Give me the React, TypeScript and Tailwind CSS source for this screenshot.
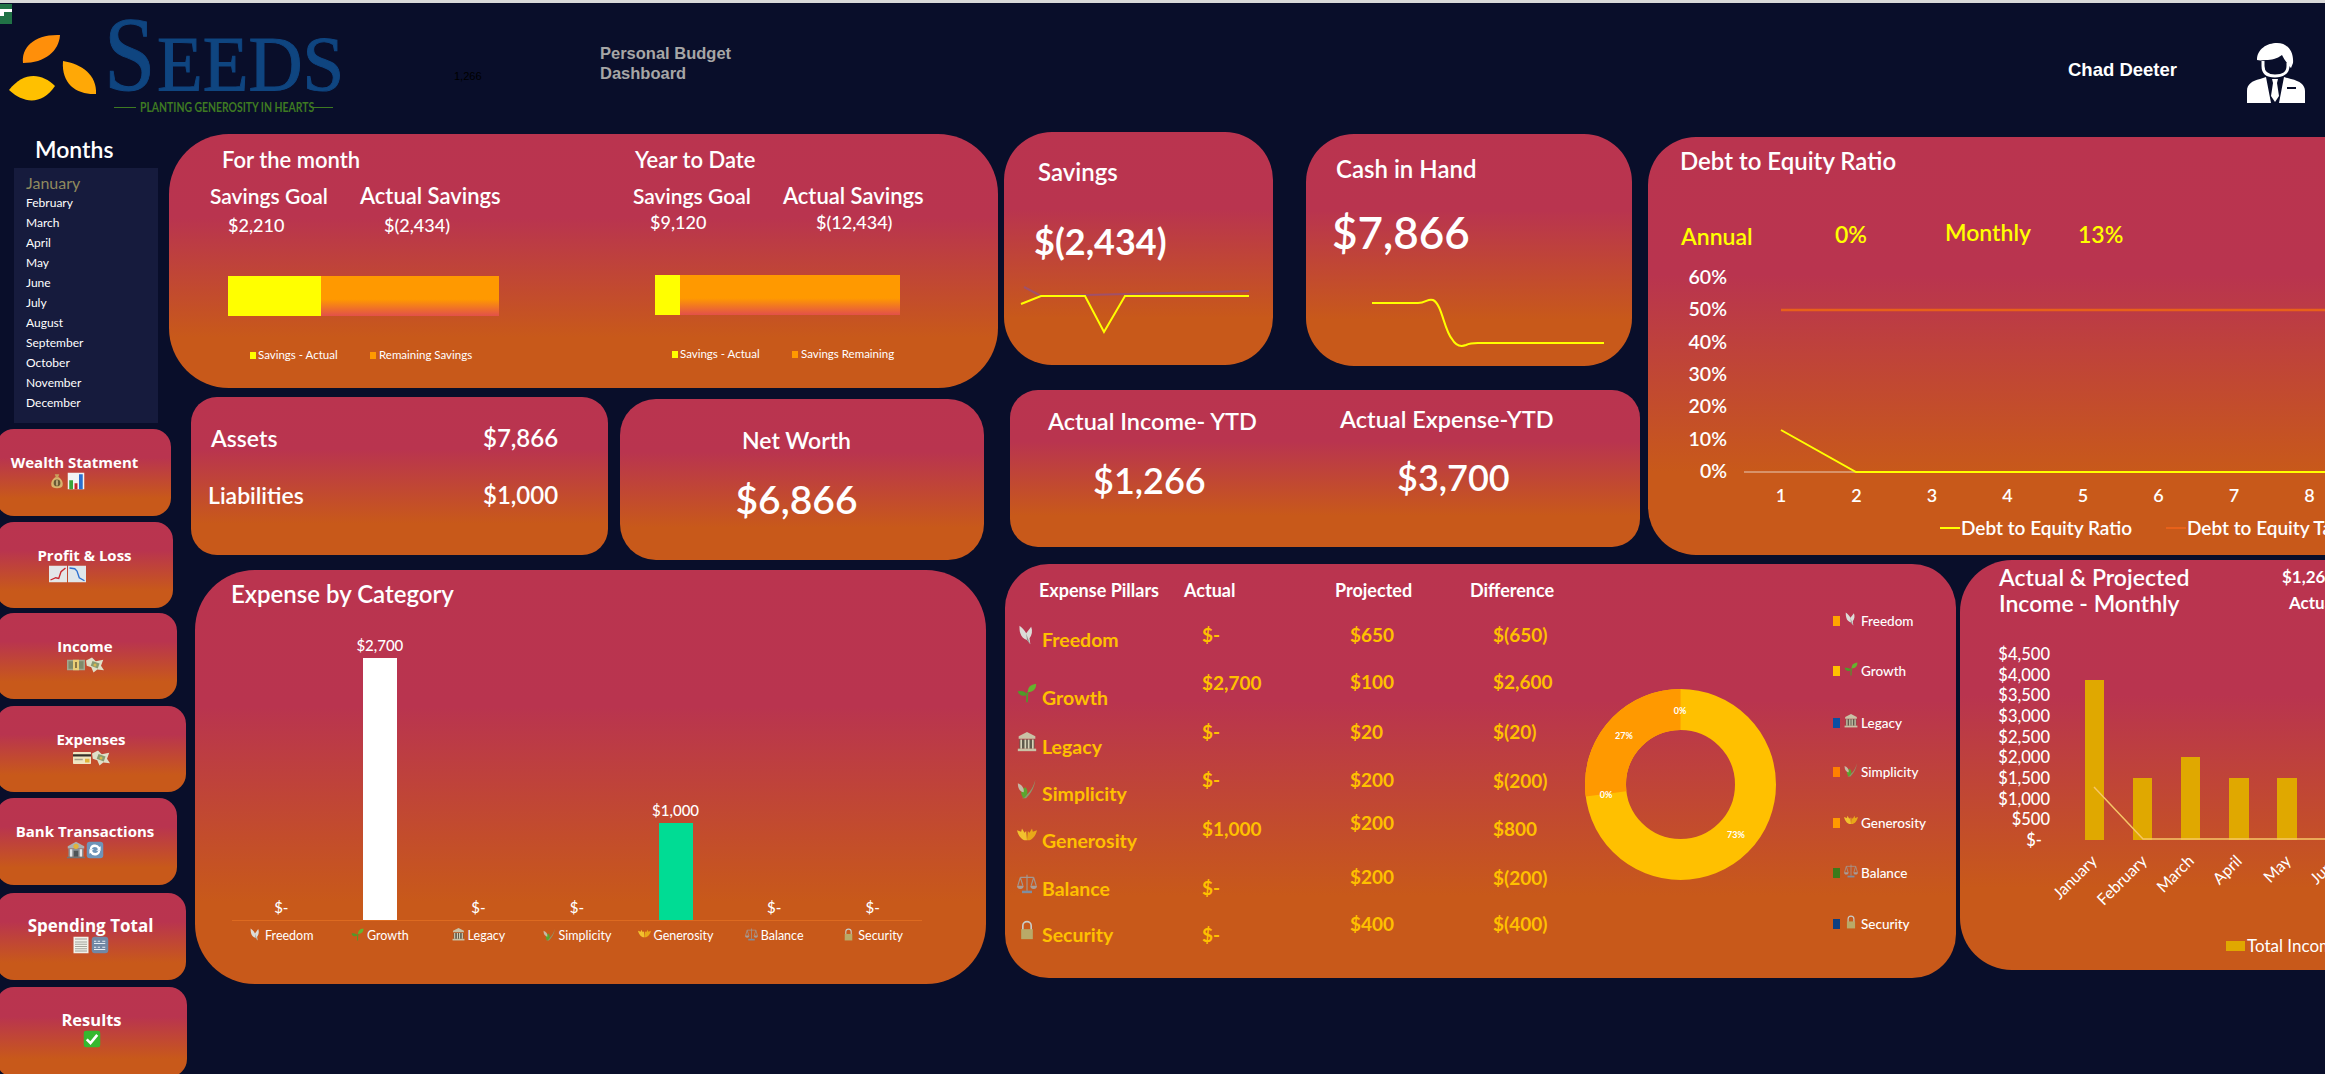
import type { ReactNode } from "react";

const grad = "bg-[linear-gradient(180deg,#ba344f_0%,#b9344f_33%,#c8591a_80%,#c8591a_100%)]";
const barFade = "bg-[linear-gradient(180deg,#ff9900_58%,#e2504a_100%)]";

type GlyphName =
  | "moneybag" | "barchart" | "chartup" | "chartdown" | "cash" | "flying" | "card" | "bank"
  | "refresh" | "receipt" | "numbers" | "check" | "dove" | "seedling" | "temple" | "herb"
  | "hands" | "scales" | "lock";

const glyphs: Record<GlyphName, ReactNode> = {
  moneybag: (
    <>
      <path d="M9 3h6l-1.500 4h-3z" fill="#c9a05c" />
      <path d="M9.500 7h5c4 3 6 7 5 11-.6 2.500-3 3.500-7.500 3.500S5.100 20.500 4.500 18c-1-4 1-8 5-11z" fill="#d9b36c" />
      <circle cx="12" cy="14.500" r="4.500" fill="#6b5a35" />
      <rect x="11.200" y="11" width="1.600" height="7" fill="#eed9a0" />
    </>
  ),
  barchart: (
    <>
      <rect x="1" y="1" width="22" height="22" fill="#f2f4f4" />
      <rect x="3" y="11" width="5" height="12" fill="#3aa53a" />
      <rect x="10" y="15" width="4" height="8" fill="#c9262c" />
      <rect x="16" y="3" width="5" height="20" fill="#2a6fd0" />
    </>
  ),
  chartup: (
    <>
      <rect x="0" y="1" width="24" height="22" fill="#e4e7e8" />
      <path d="M2 20l7-3 4 1 3-9 6-5" fill="none" stroke="#c9262c" strokeWidth="1.800" />
    </>
  ),
  chartdown: (
    <>
      <rect x="0" y="1" width="24" height="22" fill="#dfe6ea" />
      <path d="M2 4l7 1 3 3 3 9 7 4" fill="none" stroke="#2a6fd0" strokeWidth="1.800" />
    </>
  ),
  cash: (
    <>
      <rect x="0" y="5" width="24" height="14" fill="#a3a88f" />
      <rect x="2" y="7" width="20" height="10" fill="#7f8a6a" />
      <rect x="8" y="5" width="8" height="14" fill="#e8cf76" />
      <rect x="11" y="8" width="2" height="8" fill="#6b5a35" />
    </>
  ),
  flying: (
    <>
      <path d="M0 6l8-4 5 5 10-2-3 8 4 6-9-1-5 4-3-7-6-2z" fill="#dfe0c8" />
      <rect x="7" y="8" width="10" height="7" fill="#8a9a70" transform="rotate(20 12 12)" />
      <circle cx="12" cy="12" r="2" fill="#d5b84e" />
    </>
  ),
  card: (
    <>
      <rect x="0" y="4" width="24" height="16" rx="1" fill="#f0e6c2" />
      <rect x="0" y="7" width="24" height="3" fill="#34302a" />
      <rect x="2" y="13" width="11" height="2" fill="#a8a28a" />
      <rect x="16" y="13" width="6" height="5" fill="#e0b43c" />
    </>
  ),
  bank: (
    <>
      <path d="M12 1l11 6v3H1V7z" fill="#aab0b3" />
      <rect x="2" y="10" width="20" height="11" fill="#8c9296" />
      <rect x="4" y="11" width="3" height="10" fill="#e4e6e7" />
      <rect x="17" y="11" width="3" height="10" fill="#e4e6e7" />
      <rect x="9" y="13" width="6" height="8" fill="#4f5558" />
      <circle cx="12" cy="7" r="3.500" fill="#e0b43c" />
      <rect x="0" y="21" width="24" height="2" fill="#6f7578" />
    </>
  ),
  refresh: (
    <>
      <rect x="1" y="1" width="22" height="22" rx="4" fill="#6e94b8" />
      <path d="M5 11a7 7 0 0 1 13-3l1.500-1v6h-6l2.500-2A4.500 4.500 0 0 0 7.500 11z" fill="#fff" />
      <path d="M19 13a7 7 0 0 1-13 3l-1.500 1v-6h6l-2.500 2a4.500 4.500 0 0 0 8.500 0z" fill="#fff" />
    </>
  ),
  receipt: (
    <>
      <rect x="2" y="1" width="20" height="22" fill="#f1f1ea" />
      <path d="M4 4h16M4 8h16M4 11h16M4 14h16M4 17h16M4 20h16" stroke="#8a8a80" strokeWidth="1" />
    </>
  ),
  numbers: (
    <>
      <rect x="1" y="1" width="22" height="22" rx="4" fill="#7188a5" />
      <path d="M4 7h3M9 7h3M15 7h4M4 10h15M4 15h3M9 15h3M15 15h4M4 18h15" stroke="#e6edf5" strokeWidth="1.600" />
    </>
  ),
  check: (
    <>
      <rect x="1" y="1" width="22" height="22" rx="3" fill="#35b82f" />
      <path d="M5 12.500l5 5 9-11" fill="none" stroke="#fff" strokeWidth="3.500" />
    </>
  ),
  dove: (
    <>
      <path d="M3 1c3 2 6 5 8 9l6-8c2 5 1 10-2 14l1 7-4-5c-4-1-7-4-8-8-1-3-1-6-1-9z" fill="#dcdcd8" />
      <path d="M11 10l2 6 3 7-4-5z" fill="#94948f" />
    </>
  ),
  seedling: (
    <>
      <path d="M12 23c0-6 0-9 1-12" fill="none" stroke="#4f9a2a" strokeWidth="2" />
      <path d="M13 11c0-6 3-9 10-10 0 6-3 10-10 10z" fill="#65b32e" />
      <path d="M12 14c-1-3-5-5-11-4 1 5 6 7 11 4z" fill="#4f9a2a" />
    </>
  ),
  temple: (
    <>
      <path d="M12 0l10 5v3H2V5z" fill="#c9c2a6" />
      <rect x="3" y="9" width="18" height="11" fill="#5e5a4c" />
      <path d="M5 9v11M10 9v11M14 9v11M19 9v11" stroke="#d8d2b8" strokeWidth="2" />
      <rect x="1" y="20" width="22" height="3" fill="#c9c2a6" />
    </>
  ),
  herb: (
    <>
      <path d="M6 23c6-3 13-10 16-22-1 10-6 17-11 22z" fill="#8a9a70" />
      <path d="M8 23c-5-5-3-11 2-13 4 4 3 10-2 13z" fill="#5aa62e" />
      <path d="M1 5c0 7 3 10 7 11 1-5-2-9-7-11z" fill="#c6b8a4" />
    </>
  ),
  hands: (
    <>
      <path d="M0 5l5 2 1-4 3 5 2-2 1 11c-5 1-10-4-12-12z" fill="#f2c12e" />
      <path d="M24 5l-5 2-1-4-3 5-2-2-1 11c5 1 10-4 12-12z" fill="#e8a818" />
    </>
  ),
  scales: (
    <>
      <path d="M12 1v19M4 4h16M4 4l-3 10M4 4l3 10M20 4l-3 10M20 4l3 10" fill="none" stroke="#a39790" strokeWidth="1.400" />
      <path d="M0 14h8c0 2-1 4-4 4s-4-2-4-4zM16 14h8c0 2-1 4-4 4s-4-2-4-4z" fill="#a89c96" />
      <rect x="6" y="20" width="12" height="3" fill="#7f8ea0" />
    </>
  ),
  lock: (
    <>
      <path d="M7 12V7a5 5 0 0 1 10 0v5" fill="none" stroke="#c8ccc8" strokeWidth="2" />
      <rect x="5" y="11" width="14" height="12" fill="#b9aa68" />
    </>
  ),
};

function Glyph({ name, className }: { name: GlyphName; className: string }) {
  return (
    <svg viewBox="0 0 24 24" className={className}>
      {glyphs[name]}
    </svg>
  );
}

// shapes in the sheet are not on a shared grid, so a stack takes each row's centre line
function Stack({ base, lh, rows }: { base: number; lh: number; rows: { y: number; node: ReactNode }[] }) {
  let bottom = base;
  return (
    <div className="flex flex-col">
      {rows.map((r, i) => {
        const top = r.y - lh / 2;
        const gap = top - bottom;
        bottom = top + lh;
        return (
          <div key={i} className="flex items-center" style={{ marginTop: gap, height: lh }}>
            {r.node}
          </div>
        );
      })}
    </div>
  );
}

const months = ["February", "March", "April", "May", "June", "July", "August", "September", "October", "November", "December"];

const navItems: { label: string; icons: GlyphName[]; box: string; icon: string; size: string }[] = [
  { label: "Wealth Statment", icons: ["moneybag", "barchart"], box: "w-[175px] h-[87px] pr-[18px] mb-[6px]", icon: "mr-[17px]", size: "text-[15px]" },
  { label: "Profit & Loss", icons: ["chartup", "chartdown"], box: "w-[177px] h-[86px] mb-[5px]", icon: "mr-[34px]", size: "text-[15px]" },
  { label: "Income", icons: ["cash", "flying"], box: "w-[181px] h-[86px] pr-[3px] mb-[7px]", icon: "", size: "text-[15px]" },
  { label: "Expenses", icons: ["card", "flying"], box: "w-[190px] h-[86px] mb-[6px]", icon: "", size: "text-[15px]" },
  { label: "Bank Transactions", icons: ["bank", "refresh"], box: "w-[181px] h-[87px] pr-[3px] mb-[8px]", icon: "", size: "text-[15px]" },
  { label: "Spending Total", icons: ["receipt", "numbers"], box: "w-[190px] h-[87px] pr-[1px] mb-[7px]", icon: "", size: "text-[17px]" },
  { label: "Results", icons: ["check"], box: "w-[191px] h-[90px]", icon: "", size: "text-[16.5px]" },
];

const categories: { name: string; icon: GlyphName; value: string; bar?: string }[] = [
  { name: "Freedom", icon: "dove", value: "$-" },
  { name: "Growth", icon: "seedling", value: "$2,700", bar: "h-[262px] bg-white" },
  { name: "Legacy", icon: "temple", value: "$-" },
  { name: "Simplicity", icon: "herb", value: "$-" },
  { name: "Generosity", icon: "hands", value: "$1,000", bar: "h-[97px] bg-[#00dc94]" },
  { name: "Balance", icon: "scales", value: "$-" },
  { name: "Security", icon: "lock", value: "$-" },
];

const pillarRows: { name: string; icon: GlyphName; y: number }[] = [
  { name: "Freedom", icon: "dove", y: 640 },
  { name: "Growth", icon: "seedling", y: 698 },
  { name: "Legacy", icon: "temple", y: 747 },
  { name: "Simplicity", icon: "herb", y: 794 },
  { name: "Generosity", icon: "hands", y: 841 },
  { name: "Balance", icon: "scales", y: 889 },
  { name: "Security", icon: "lock", y: 935 },
];

const actuals: [string, number][] = [["$-", 635], ["$2,700", 683], ["$-", 732], ["$-", 780], ["$1,000", 829], ["$-", 888], ["$-", 935]];
const projected: [string, number][] = [["$650", 635], ["$100", 682], ["$20", 732], ["$200", 780], ["$200", 823], ["$200", 877], ["$400", 924]];
const difference: [string, number][] = [["$(650)", 635], ["$2,600", 682], ["$(20)", 732], ["$(200)", 781], ["$800", 829], ["$(200)", 878], ["$(400)", 924]];

const donutLegend: { name: string; icon: GlyphName; y: number; color: string }[] = [
  { name: "Freedom", icon: "dove", y: 621, color: "bg-[#ffa500]" },
  { name: "Growth", icon: "seedling", y: 671, color: "bg-[#ffc000]" },
  { name: "Legacy", icon: "temple", y: 723, color: "bg-[#0b4ea2]" },
  { name: "Simplicity", icon: "herb", y: 772, color: "bg-[#ff8000]" },
  { name: "Generosity", icon: "hands", y: 823, color: "bg-[#ff9900]" },
  { name: "Balance", icon: "scales", y: 873, color: "bg-[#3b7a1a]" },
  { name: "Security", icon: "lock", y: 924, color: "bg-[#0d3f80]" },
];

function Header() {
  return (
    <div className="relative flex h-[129px] shrink-0">
      <div className="absolute left-0 top-px h-[20px] w-[12px] bg-[#217346]">
        <div className="mt-[5px] h-[3px] w-[12px] bg-white" />
        <div className="h-[4px] w-[4px] bg-white" />
      </div>
      <div className="flex w-[454px] shrink-0">
        <svg viewBox="0 0 100 105" className="h-[105px] w-[100px] shrink-0">
          <path d="M60 32C59 48 45 60 23 60 21 45 34 31 60 32z" fill="#ff8f0a" />
          <path d="M63 58C82 61 97 72 96 91 78 92 61 82 63 58z" fill="#ffa806" />
          <path d="M9 87C24 68 42 70 55 83 42 102 24 101 9 87z" fill="#ffc000" />
        </svg>
        <div className="ml-[4px] flex h-[104px] w-[250px] shrink-0 items-baseline font-[family-name:'Liberation_Serif',serif] leading-[104px] text-[#0f4580] [-webkit-text-stroke:1px_#0f4580]">
          <span className="w-[53px] shrink-0 origin-left scale-x-[0.88] text-[105px]">S</span>
          <span className="origin-left scale-x-[0.96] text-[78px]">EEDS</span>
        </div>
      </div>
      <div className="absolute left-[114px] top-[95px] flex h-[18px] items-center">
        <div className="h-px w-[22px] bg-[#3e7a22]" />
        <div className="mx-[4px] w-[167px]">
          <div className="origin-left scale-x-[0.8] whitespace-nowrap text-[13px] font-bold leading-[18px] text-[#3e7a22]">PLANTING GENEROSITY IN HEARTS</div>
        </div>
        <div className="h-px w-[22px] bg-[#3e7a22]" />
      </div>
      <div className="mt-[65px] w-[146px] shrink-0 font-[family-name:'Liberation_Sans',sans-serif] text-[11px] leading-4 text-black">1,266</div>
      <div className="mt-[40px] w-[1468px] shrink-0 font-[family-name:'Liberation_Sans',sans-serif] text-[16.5px] font-bold leading-5 text-[#a6a6a6]">
        <div>Personal Budget</div>
        <div>Dashboard</div>
      </div>
      <div className="mt-[55px] w-[162px] shrink-0 font-[family-name:'Liberation_Sans',sans-serif] text-[18.5px] font-bold leading-6 text-white">Chad Deeter</div>
      <svg viewBox="0 0 90 80" className="mt-[32px] h-[80px] w-[90px] shrink-0">
        <path d="M27 25C27 14 37 8 47 8c11 0 17 9 16 20l-2 5c-3-3-7-9-9-13-5 4-11 5-16 5-3 0-5 1-9 0z" fill="#fff" />
        <path d="M33 26v5c0 7 5 10 12 10s13-3 13-10v-3" fill="none" stroke="#fff" strokeWidth="3" />
        <path d="M17 68V56c0-7 5-10 13-12l6-2 5 26h8l5-26 7 2c9 2 14 6 14 12v12z" fill="#fff" />
        <path d="M42 44h6l-1 4 2 13-4 6-4-6 2-13z" fill="#fff" />
        <rect x="57" y="52" width="9" height="2" fill="#090e2a" />
      </svg>
    </div>
  );
}

function Sidebar() {
  return (
    <div className="flex w-[169px] shrink-0 flex-col">
      <div className="ml-[35px] h-9 shrink-0 text-[23px] font-semibold leading-[34px] text-white">Months</div>
      <div className="ml-[14px] h-[255px] w-[144px] shrink-0 bg-[#161b3d] pl-[12px] pt-[5px] text-[12px] leading-5 text-white">
        <div className="text-[16px] text-[#8f8a5e]">January</div>
        {months.map((m) => (
          <div key={m}>{m}</div>
        ))}
      </div>
      <div className="-ml-[4px] mt-[6px] flex flex-col">
        {navItems.map((n) => (
          <div key={n.label} className={`${n.box} ${grad} shrink-0 rounded-[18px] pt-[23px] text-center`}>
            <div className={`font-[family-name:'Open_Sans',sans-serif] ${n.size} font-bold leading-5 text-white`}>{n.label}</div>
            <div className={`flex h-[20px] justify-center gap-px ${n.icon}`}>
              {n.icons.map((g) => (
                <Glyph key={g} name={g} className="h-[18px] w-[18px]" />
              ))}
            </div>
          </div>
        ))}
      </div>
    </div>
  );
}

function GoalPanel(props: {
  title: string; goal: string; actual: string; box: string; titleBox: string; goalBox: string; valueBox: string;
  valueGap: string; barBox: string; yellow: string; legend: string[]; legendBox: string; secondGap: string;
}) {
  return (
    <div className={props.box}>
      <div className={`${props.titleBox} text-[22px] font-semibold leading-7`}>{props.title}</div>
      <div className="mt-[8px] flex text-[21px] font-semibold leading-7">
        <div className={props.goalBox}>Savings Goal</div>
        <div className="text-[22px]">Actual Savings</div>
      </div>
      <div className={`${props.valueBox} flex text-[18px] font-medium leading-6`}>
        <div className={props.valueGap}>{props.goal}</div>
        <div>{props.actual}</div>
      </div>
      <div className={`${props.barBox} flex h-[40px]`}>
        <div className={`${props.yellow} bg-[#ffff00]`} />
        <div className={`flex-1 ${barFade}`} />
      </div>
      <div className={`${props.legendBox} flex h-4 items-center text-[11.5px] leading-4`}>
        <div className="mr-[2px] h-[7px] w-[6px] bg-[#ffff00]" />
        <div className={props.secondGap}>{props.legend[0]}</div>
        <div className="mr-[3px] h-[7px] w-[6px] bg-[#ff9900]" />
        <div>{props.legend[1]}</div>
      </div>
    </div>
  );
}

function SavingsCard() {
  return (
    <div className={`flex h-[254px] w-[829px] shrink-0 rounded-[60px] text-white ${grad} mt-[2px] pt-[12px]`}>
      <GoalPanel
        title="For the month" goal="$2,210" actual="$(2,434)" box="w-[464px] pl-[41px]" titleBox="ml-[12px]"
        goalBox="w-[150px]" valueBox="ml-[18px] mt-[3px]" valueGap="w-[156px]" barBox="ml-[18px] mt-[39px] w-[271px]"
        yellow="w-[93px]" legend={["Savings - Actual", "Remaining Savings"]} legendBox="ml-[40px] mt-[31px]" secondGap="w-[112px]"
      />
      <GoalPanel
        title="Year to Date" goal="$9,120" actual="$(12,434)" box="pl-0" titleBox="ml-[2px]"
        goalBox="w-[150px]" valueBox="ml-[17px] mt-0" valueGap="w-[166px]" barBox="ml-[22px] mt-[41px] w-[245px]"
        yellow="w-[25px]" legend={["Savings - Actual", "Savings Remaining"]} legendBox="ml-[39px] mt-[31px]" secondGap="w-[112px]"
      />
    </div>
  );
}

function ExpenseCard() {
  return (
    <div className={`ml-[26px] mt-[10px] h-[414px] w-[791px] shrink-0 rounded-[60px] pl-[36px] pt-[9px] text-white ${grad}`}>
      <div className="text-[24px] font-semibold leading-[30px]">Expense by Category</div>
      <div className="ml-px mt-[19px] grid h-[293px] w-[690px] grid-cols-7 border-b border-[#dd6a20]">
        {categories.map((c) => (
          <div key={c.name} className="flex flex-col items-center justify-end">
            <div className="mb-[3px] text-[15px] font-medium leading-5">{c.value}</div>
            {c.bar && <div className={`w-[34px] ${c.bar}`} />}
          </div>
        ))}
      </div>
      <div className="ml-px mt-[5px] grid w-[690px] grid-cols-7">
        {categories.map((c) => (
          <div key={c.name} className="flex h-5 items-center justify-center gap-[3px] text-[12.5px] leading-5">
            <Glyph name={c.icon} className="h-[15px] w-[13px] -translate-y-[2px]" />
            {c.name}
          </div>
        ))}
      </div>
    </div>
  );
}

function MiniStats() {
  return (
    <div className="flex h-[172px] shrink-0 text-white">
      <div className={`ml-[22px] mt-[9px] h-[158px] w-[417px] rounded-[26px] pt-[26px] ${grad}`}>
        <div className="flex h-[30px] items-center text-[23px] font-semibold">
          <div className="ml-[20px] w-[272px]">Assets</div>
          <div className="text-[24px]">$7,866</div>
        </div>
        <div className="mt-[27px] flex h-[30px] items-center text-[23px] font-semibold">
          <div className="ml-[17px] w-[275px]">Liabilities</div>
          <div className="text-[24px]">$1,000</div>
        </div>
      </div>
      <div className={`ml-[12px] mt-[11px] h-[161px] w-[364px] rounded-[36px] pr-[11px] pt-[26px] text-center ${grad}`}>
        <div className="text-[23px] font-semibold leading-[30px]">Net Worth</div>
        <div className="mt-[19px] text-[39px] font-semibold leading-[50px]">$6,866</div>
      </div>
    </div>
  );
}

function TopCards() {
  return (
    <div className="flex h-[428px] shrink-0 text-white">
      <div className="flex w-[636px] shrink-0 flex-col">
        <div className="flex h-[234px]">
          <div className={`h-[233px] w-[269px] rounded-[48px] pl-[34px] pt-[25px] ${grad}`}>
            <div className="text-[24px] font-semibold leading-[30px]">Savings</div>
            <div className="-ml-[4px] mt-[32px] text-[36px] font-bold leading-[44px]">$(2,434)</div>
            <svg viewBox="0 0 269 60" className="-ml-[34px] mt-[17px] h-[60px] w-[269px]">
              <path d="M20 7L37 16 81 15 165 13 245 11" fill="none" stroke="#a0506a" strokeWidth="2" />
              <path d="M17 24L37 16H81L100 52 121 16H245" fill="none" stroke="#ffff00" strokeWidth="2" />
            </svg>
          </div>
          <div className={`ml-[33px] mt-[2px] h-[232px] w-[326px] rounded-[48px] pl-[30px] pt-[20px] ${grad}`}>
            <div className="text-[24px] font-semibold leading-[30px]">Cash in Hand</div>
            <div className="-ml-[4px] mt-[22px] text-[44px] font-semibold leading-[52px]">$7,866</div>
            <svg viewBox="0 0 326 70" className="-ml-[30px] mt-[32px] h-[70px] w-[326px]">
              <path d="M66 13H112C120 13 122 8 127 10 136 14 138 40 146 49 150 56 155 57 160 55 164 53 168 53 172 53H298" fill="none" stroke="#ffff00" strokeWidth="2" />
            </svg>
          </div>
        </div>
        <div className={`ml-[6px] mt-[24px] flex h-[157px] w-[630px] rounded-[28px] ${grad}`}>
          <div className="w-[330px] pl-[38px] pt-[16px]">
            <div className="text-[23.5px] font-semibold leading-[30px]">Actual Income- YTD</div>
            <div className="ml-[45px] mt-[22px] text-[36px] font-semibold leading-[44px]">$1,266</div>
          </div>
          <div className="pt-[14px]">
            <div className="text-[23.5px] font-semibold leading-[30px]">Actual Expense-YTD</div>
            <div className="ml-[57px] mt-[21px] text-[36px] font-semibold leading-[44px]">$3,700</div>
          </div>
        </div>
      </div>
      <DebtCard />
    </div>
  );
}

function DebtCard() {
  const ticks = ["60%", "50%", "40%", "30%", "20%", "10%", "0%"];
  const tickY = [14, 46, 79, 111, 143, 176, 208];
  return (
    <div className={`ml-[8px] mt-[5px] h-[418px] w-[760px] shrink-0 rounded-[48px] pt-[9px] ${grad}`}>
      <div className="pl-[32px] text-[24px] font-semibold leading-[30px]">Debt to Equity Ratio</div>
      <div className="mt-[41px] flex h-[34px] items-start pl-[33px] text-[23px] font-semibold leading-[30px] text-[#ffff00]">
        <div className="mt-[4px] w-[154px]">Annual</div>
        <div className="mt-[2px] w-[110px]">0%</div>
        <div className="w-[133px]">Monthly</div>
        <div className="mt-[2px]">13%</div>
      </div>
      <svg viewBox="0 0 760 245" className="mt-[11px] h-[245px] w-[760px] font-semibold">
        {ticks.map((t, i) => (
          <text key={t} x="79" y={tickY[i]} textAnchor="end" dominantBaseline="central" className="fill-white text-[19.5px]">{t}</text>
        ))}
        <line x1="96" y1="210" x2="760" y2="210" stroke="#e8cdb8" strokeWidth="1" />
        <line x1="133" y1="48" x2="760" y2="48" stroke="#e8611a" strokeWidth="2.500" />
        <path d="M133 168L208 210H760" fill="none" stroke="#ffff00" strokeWidth="2" />
        {[1, 2, 3, 4, 5, 6, 7, 8, 9].map((n, i) => (
          <text key={n} x={133 + 75.500 * i} y="233" textAnchor="middle" dominantBaseline="central" className="fill-white text-[18px]">{n}</text>
        ))}
      </svg>
      <div className="ml-[292px] mt-[8px] flex h-[26px] items-center whitespace-nowrap text-[19px] font-semibold leading-[26px]">
        <div className="h-[2px] w-[20px] bg-[#ffff00]" />
        <div className="ml-px w-[205px]">Debt to Equity Ratio</div>
        <div className="h-[2px] w-[20px] bg-[#e8611a]" />
        <div className="ml-px">Debt to Equity Target</div>
      </div>
    </div>
  );
}

function PillarsCard() {
  const valueCol = (rows: [string, number][]) => (
    <Stack base={602} lh={28} rows={rows.map(([v, y]) => ({ y, node: v }))} />
  );
  return (
    <div className={`ml-[1px] mt-[4px] flex h-[414px] w-[951px] shrink-0 rounded-[44px] ${grad}`}>
      <div className="w-[580px] shrink-0 pt-[14px]">
        <div className="flex h-[24px] text-[18px] font-bold leading-6 text-white">
          <div className="ml-[34px] w-[145px]">Expense Pillars</div>
          <div className="w-[151px]">Actual</div>
          <div className="w-[135px]">Projected</div>
          <div>Difference</div>
        </div>
        <div className="flex pl-[12px] text-[19.5px] font-bold leading-7 text-[#ffc000]">
          <div className="w-[185px]">
            <Stack
              base={602}
              lh={28}
              rows={pillarRows.map((p) => ({
                y: p.y,
                node: (
                  <>
                    <Glyph name={p.icon} className="mr-[5px] h-[24px] w-[20px] -translate-y-[5px]" />
                    {p.name}
                  </>
                ),
              }))}
            />
          </div>
          <div className="w-[148px] text-[19px]">{valueCol(actuals)}</div>
          <div className="w-[143px] text-[19px]">{valueCol(projected)}</div>
          <div className="text-[19px]">{valueCol(difference)}</div>
        </div>
      </div>
      <svg viewBox="0 0 191 191" className="mt-[125px] h-[191px] w-[191px] shrink-0 font-bold">
        <circle cx="95.500" cy="95.500" r="75" fill="none" stroke="#ffc000" strokeWidth="41" />
        <circle
          cx="95.500" cy="95.500" r="75" fill="none" stroke="#ff9900" strokeWidth="41"
          strokeDasharray="127.200 471.200" transform="rotate(172.800 95.500 95.500)"
        />
        <g className="fill-white text-[9px]" textAnchor="middle" dominantBaseline="central">
          <text x="95" y="21">0%</text>
          <text x="39" y="46">27%</text>
          <text x="21" y="105">0%</text>
          <text x="151" y="145">73%</text>
        </g>
      </svg>
      <div className="ml-[57px] text-[13.5px] font-medium text-white">
        <Stack
          base={564}
          lh={24}
          rows={donutLegend.map((d) => ({
            y: d.y,
            node: (
              <>
                <div className={`mr-[4px] h-[10px] w-[7px] ${d.color}`} />
                <Glyph name={d.icon} className="mr-[3px] h-[18px] w-[14px] -translate-y-[2px]" />
                {d.name}
              </>
            ),
          }))}
        />
      </div>
    </div>
  );
}

function MonthlyCard() {
  const ticks = ["$4,500", "$4,000", "$3,500", "$3,000", "$2,500", "$2,000", "$1,500", "$1,000", "$500"];
  const tickY = [24, 45, 65, 86, 107, 127, 148, 169, 189];
  const bars = [
    { x: 125, top: 50, w: 19 },
    { x: 173, top: 148, w: 19 },
    { x: 221, top: 127, w: 19 },
    { x: 269, top: 148, w: 20 },
    { x: 317, top: 148, w: 20 },
    { x: 365, top: 148, w: 20 },
  ];
  const labels = [["January", 138], ["February", 188], ["March", 235], ["April", 283], ["May", 332], ["June", 380]] as const;
  return (
    <div className={`ml-[4px] h-[410px] w-[500px] shrink-0 rounded-[52px] pt-[4px] text-white ${grad}`}>
      <div className="flex">
        <div className="w-[322px] pl-[39px] text-[23px] font-semibold leading-[26px]">
          <div>Actual & Projected</div>
          <div>Income - Monthly</div>
        </div>
        <div className="text-[17px] font-bold leading-[26px]">
          <div>$1,266</div>
          <div className="ml-[7px]">Actual</div>
        </div>
      </div>
      <svg viewBox="0 0 500 290" className="mt-[14px] h-[290px] w-[500px] font-medium">
        {ticks.map((t, i) => (
          <text key={t} x="90" y={tickY[i]} textAnchor="end" dominantBaseline="central" className="fill-white text-[16.5px]">{t}</text>
        ))}
        <text x="82" y="210" textAnchor="end" dominantBaseline="central" className="fill-white text-[16.5px]">$-</text>
        {bars.map((b) => (
          <rect key={b.x} x={b.x} y={b.top} width={b.w} height={210 - b.top} fill="#e0a800" />
        ))}
        <path d="M134 157L183 209H500" fill="none" stroke="#f6c667" strokeWidth="1.500" />
        {labels.map(([m, x]) => (
          <text key={m} x={x} y="232" textAnchor="end" transform={`rotate(-45 ${x} 232)`} className="fill-white text-[16px] font-normal">{m}</text>
        ))}
      </svg>
      <div className="ml-[266px] mt-[14px] flex h-6 items-center whitespace-nowrap text-[17px] leading-6">
        <div className="mr-[2px] h-[10px] w-[19px] bg-[#e0a800]" />
        Total Income
      </div>
    </div>
  );
}

export default function App() {
  return (
    <div className="flex h-[1074px] w-[2325px] flex-col overflow-hidden bg-[#090e2a] font-[family-name:Lato,sans-serif]">
      <div className="h-[3px] shrink-0 bg-[#d9d9d9]" />
      <Header />
      <div className="flex min-h-0 flex-1">
        <Sidebar />
        <div className="flex w-[829px] shrink-0 flex-col">
          <SavingsCard />
          <MiniStats />
          <ExpenseCard />
        </div>
        <div className="ml-[6px] flex w-[1321px] shrink-0 flex-col">
          <TopCards />
          <div className="flex text-white">
            <PillarsCard />
            <MonthlyCard />
          </div>
        </div>
      </div>
    </div>
  );
}
